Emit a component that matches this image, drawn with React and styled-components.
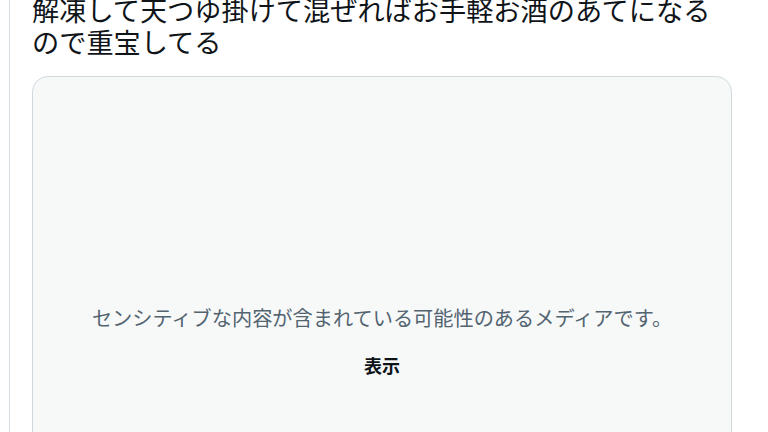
import React from 'react'
import styled, { createGlobalStyle } from 'styled-components'

const Global = createGlobalStyle`
  html, body {
    margin: 0;
    padding: 0;
    background: #ffffff;
    overflow: hidden;
  }
  body {
    font-family: "Noto Sans CJK JP", "Noto Sans", sans-serif;
  }
`

const Page = styled.div`
  height: 432px;
  overflow: hidden;
  padding-left: 9px;
`

const Tweet = styled.article`
  width: 745px;
  height: 500px;
  border-left: 1px solid #d6dee3;
  border-right: 1px solid #d6dee3;
  padding-left: 22px;
  box-sizing: content-box;
`

const Body = styled.p`
  margin: -7px 0 0 0;
  font-size: 27.2px;
  line-height: 32px;
  color: #0f1419;
`

const Media = styled.div`
  margin-top: 19px;
  width: 700px;
  height: 420px;
  border: 1px solid #cfd9de;
  border-radius: 16px;
  background: #f7f9f9;
  display: flex;
  flex-direction: column;
  align-items: center;
  padding-top: 229px;
  box-sizing: border-box;
`

const Warning = styled.div`
  font-size: 20.2px;
  line-height: 24px;
  color: #536471;
`

const ShowButton = styled.button`
  margin-top: 23px;
  border: none;
  background: none;
  padding: 0;
  font-family: inherit;
  font-size: 18px;
  font-weight: 700;
  line-height: 24px;
  color: #0f1419;
`

export default function App() {
  return (
    <Page>
      <Global />
      <Tweet>
        <Body>
          解凍して天つゆ掛けて混ぜればお手軽お酒のあてになる
          <br />
          ので重宝してる
        </Body>
        <Media>
          <Warning>センシティブな内容が含まれている可能性のあるメディアです。</Warning>
          <ShowButton>表示</ShowButton>
        </Media>
      </Tweet>
    </Page>
  )
}
